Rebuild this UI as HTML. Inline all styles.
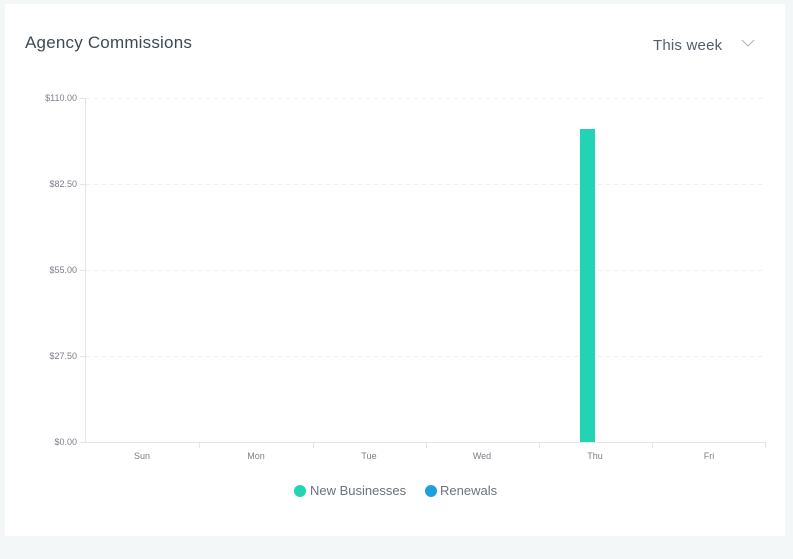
<!DOCTYPE html>
<html><head><style>
html,body{margin:0;padding:0;background:#f4f7f8;width:793px;height:559px;overflow:hidden;font-family:"Liberation Sans",sans-serif}
.card{position:absolute;left:5px;top:4px;width:780px;height:532px;background:#fff}
.title{position:absolute;left:20px;top:29px;font-size:17px;color:#3d4a55;letter-spacing:0.2px}
.sel{position:absolute;left:648px;top:33px;font-size:15px;color:#555e68;letter-spacing:0.2px}
</style></head><body>
<div class="card">
<div class="title">Agency Commissions</div>
<div class="sel">This week</div>
</div>
<svg width="793" height="559" style="position:absolute;left:0;top:0" font-family="Liberation Sans, sans-serif">
<path d="M742 40 L748 46 L754 40" fill="none" stroke="#b0b4bb" stroke-width="1.1"/>
<g stroke="#efeff1" stroke-dasharray="4,4" stroke-width="1">
<line x1="86" y1="98.5" x2="765" y2="98.5"/>
<line x1="86" y1="184.5" x2="765" y2="184.5"/>
<line x1="86" y1="270.5" x2="765" y2="270.5"/>
<line x1="86" y1="356.5" x2="765" y2="356.5"/>
</g>
<g stroke="#e4e4e6" stroke-width="1">
<line x1="85.5" y1="98" x2="85.5" y2="442"/>
<line x1="80" y1="442.5" x2="765" y2="442.5"/>
<line x1="80" y1="98.5" x2="85" y2="98.5"/>
<line x1="80" y1="184.5" x2="85" y2="184.5"/>
<line x1="80" y1="270.5" x2="85" y2="270.5"/>
<line x1="80" y1="356.5" x2="85" y2="356.5"/>
<line x1="199.5" y1="442" x2="199.5" y2="448"/>
<line x1="313.5" y1="442" x2="313.5" y2="448"/>
<line x1="426.5" y1="442" x2="426.5" y2="448"/>
<line x1="539.5" y1="442" x2="539.5" y2="448"/>
<line x1="652.5" y1="442" x2="652.5" y2="448"/>
<line x1="765.5" y1="442" x2="765.5" y2="448"/>
</g>
<g font-size="9" fill="#7a7f88" text-anchor="end">
<text x="77" y="101">$110.00</text>
<text x="77" y="187">$82.50</text>
<text x="77" y="273">$55.00</text>
<text x="77" y="359">$27.50</text>
<text x="77" y="445">$0.00</text>
</g>
<g font-size="9" fill="#7a7f88" text-anchor="middle">
<text x="142" y="459">Sun</text>
<text x="256" y="459">Mon</text>
<text x="369" y="459">Tue</text>
<text x="482" y="459">Wed</text>
<text x="595" y="459">Thu</text>
<text x="709" y="459">Fri</text>
</g>
<rect x="580" y="129" width="15" height="313" fill="#22d3b4"/>
<circle cx="300" cy="491" r="6" fill="#22d3b4"/>
<text x="310" y="495" font-size="13" fill="#6b7280">New Businesses</text>
<circle cx="431" cy="491" r="6" fill="#1ea0e0"/>
<text x="440" y="495" font-size="13" fill="#6b7280">Renewals</text>
</svg>
</body></html>
